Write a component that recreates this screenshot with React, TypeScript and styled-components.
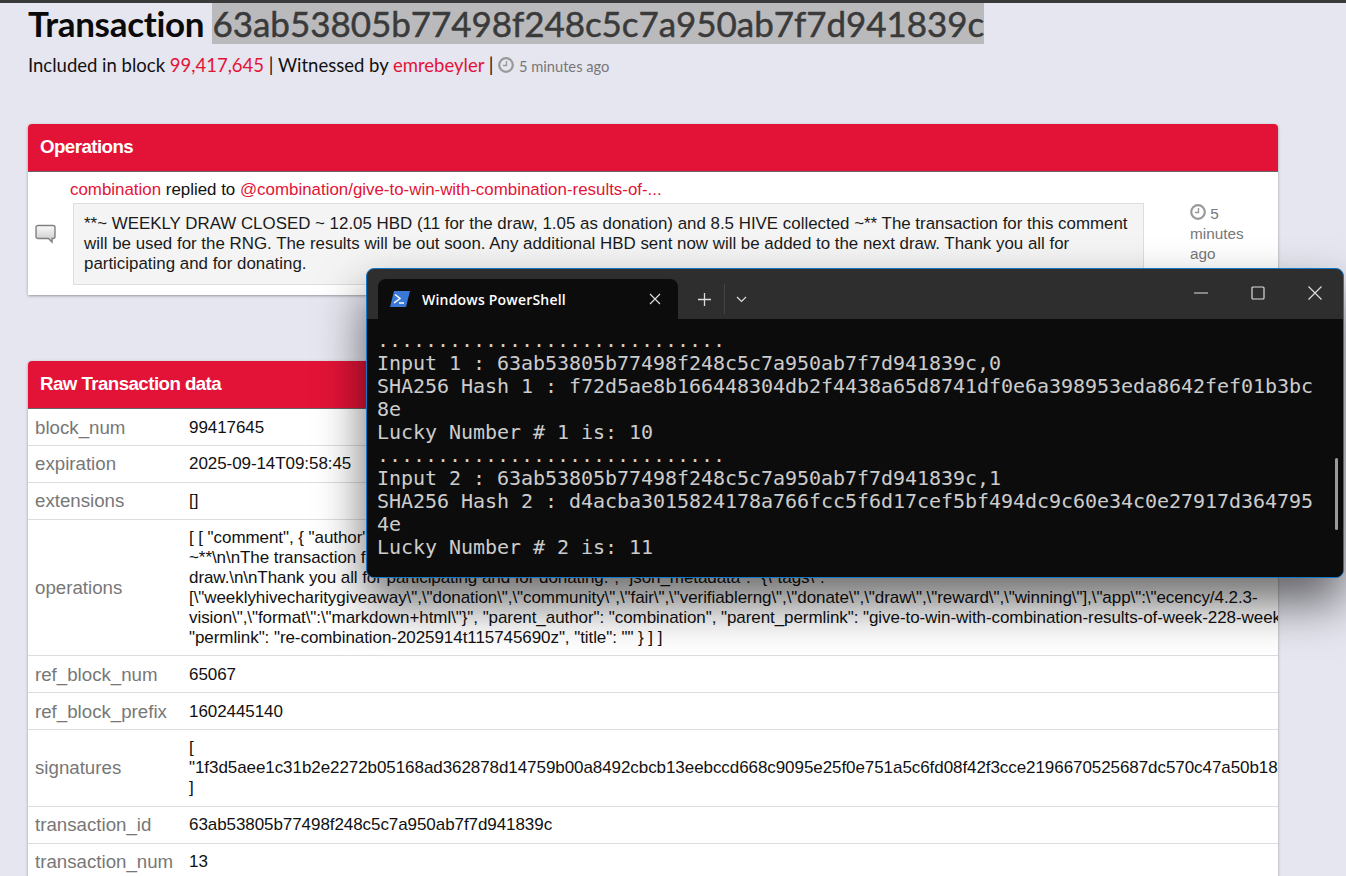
import React from 'react';
import styled, { createGlobalStyle } from 'styled-components';

const GlobalStyle = createGlobalStyle`
  html, body {
    margin: 0;
    padding: 0;
    height: 876px;
    overflow: hidden;
    background: #e6e6f0;
    font-family: "Liberation Sans", Arial, sans-serif;
    color: #111;
  }
`;

const Page = styled.div`
  position: relative;
  height: 876px;
  overflow: hidden;
  border-top: 3px solid #3a3a3a;
  box-sizing: border-box;
`;

const Content = styled.div`
  width: 1250px;
  margin-left: 28px;
`;

const Title = styled.h1`
  margin: 0;
  font-family: Lato, sans-serif;
  font-size: 35px;
  font-weight: 700;
  line-height: 41px;
  letter-spacing: -0.3px;
  color: #0a0a0a;
  white-space: nowrap;
`;

const Selected = styled.span`
  background: #bababd;
  color: #3a3a3a;
  font-weight: 400;
  letter-spacing: -0.05px;
  -webkit-text-stroke: 0.5px #3a3a3a;
`;

const SubLine = styled.div`
  margin-top: 9px;
  font-family: Lato, sans-serif;
  font-size: 18.5px;
  line-height: 24px;
  color: #111;
  white-space: nowrap;
`;

const Link = styled.a`
  color: #e31337;
  text-decoration: none;
`;

const Time = styled.span`
  font-size: 14.7px;
  color: #777;
`;

const ClockSvg = styled.svg`
  width: 16px;
  height: 16px;
  vertical-align: -1px;
`;

const Panel = styled.section<{ $top: number }>`
  margin-top: ${(p) => p.$top}px;
  background: #fff;
  border-radius: 4px 4px 0 0;
  box-shadow: 0 1px 3px rgba(0, 0, 0, 0.35);
  overflow: hidden;
`;

const PanelHeader = styled.div`
  height: 45px;
  padding: 0 0 2px 12px;
  display: flex;
  align-items: center;
  background: #e31337;
  border-bottom: 1px solid #666;
  color: #fff;
  font-size: 18.7px;
  font-weight: 700;
  letter-spacing: -0.55px;
`;

const OpRow = styled.div`
  display: grid;
  grid-template-columns: 42px 1074px 1fr;
  height: 123px;
  font-size: 16.9px;
  line-height: 20px;
`;

const OpIcon = styled.div`
  display: flex;
  align-items: center;
  padding: 1px 0 0 7px;
`;

const OpBody = styled.div`
  padding-top: 8px;
`;

const OpLine = styled.div`
  white-space: nowrap;
`;

const Quote = styled.div`
  margin: 3px 0 0 3px;
  padding: 10px;
  background: #f4f4f4;
  border: 1px solid #ddd;
  color: #1a1a1a;
`;

const OpTime = styled.div`
  padding: 32px 0 0 46px;
  width: 60px;
  color: #777;
  font-size: 15.3px;
`;

const DataRow = styled.div`
  display: grid;
  grid-template-columns: 153px 1fr;
  border-bottom: 1px solid #ddd;
  font-size: 17px;
  line-height: 19.9px;
`;

const DataKey = styled.div`
  padding: 1px 0 0 7px;
  display: flex;
  align-items: center;
  color: #777;
  font-size: 18.7px;
`;

const DataValue = styled.div`
  padding: 8.5px 8px 7.5px;
  white-space: pre;
  overflow: hidden;
  color: #111;
  letter-spacing: -0.07px;
`;

const Terminal = styled.div`
  position: absolute;
  left: 366px;
  top: 265px;
  width: 978px;
  height: 310px;
  box-sizing: border-box;
  display: flex;
  flex-direction: column;
  background: #2e2e2e;
  border: 1px solid #1476c6;
  border-radius: 8px;
  box-shadow: 0 25px 48px rgba(0, 0, 0, 0.58);
  overflow: hidden;
`;

const TitleBar = styled.div`
  height: 50px;
  flex: none;
  display: flex;
  align-items: flex-end;
  padding-left: 11px;
  color: #fff;
`;

const Tab = styled.div`
  width: 300px;
  height: 40px;
  box-sizing: border-box;
  padding: 0 17px 0 12px;
  display: flex;
  align-items: center;
  background: #0c0c0c;
  border-radius: 8px 8px 0 0;
  font-family: "Open Sans", sans-serif;
  font-size: 14px;
  font-weight: 600;
  letter-spacing: 0.2px;
`;

const TabLabel = styled.span`
  margin-left: 12px;
  flex: 1;
`;

const TabTools = styled.div`
  display: flex;
  align-items: center;
  height: 40px;
`;

const ToolButton = styled.div`
  width: 52px;
  height: 40px;
  display: flex;
  align-items: center;
  justify-content: center;
`;

const ToolDivider = styled.div`
  width: 1px;
  height: 30px;
  margin: 0 -10px 0 -6px;
  background: #444;
`;

const WindowButtons = styled.div`
  display: flex;
  margin-left: auto;
  align-self: flex-start;
`;

const WindowButton = styled.div`
  width: 57px;
  height: 48px;
  display: flex;
  align-items: center;
  justify-content: center;
`;

const Screen = styled.div`
  position: relative;
  flex: 1;
  background: #0c0c0c;
  padding: 10px 0 0 10px;
  overflow: hidden;
`;

const Output = styled.pre`
  margin: 0;
  font-family: "DejaVu Sans Mono", monospace;
  font-size: 20px;
  line-height: 23px;
  letter-spacing: -0.04px;
  color: #cccccc;
`;

const ScrollThumb = styled.div`
  position: absolute;
  right: 5px;
  top: 139px;
  width: 3px;
  height: 72px;
  border-radius: 2px;
  background: #9a9a9a;
`;

const Clock = () => (
  <ClockSvg viewBox="0 0 16 16" fill="none">
    <circle cx="8" cy="8" r="6.8" stroke="#999" strokeWidth="2.2" />
    <path d="M8.5 4v4.5H5" stroke="#999" strokeWidth="1.4" />
  </ClockSvg>
);

const rows: [string, string][] = [
  ['block_num', '99417645'],
  ['expiration', '2025-09-14T09:58:45'],
  ['extensions', '[]'],
  [
    'operations',
    `[ [ "comment", { "author": "combination", "body": "**~ WEEKLY DRAW CLOSED ~ 12.05 HBD (11 for the draw, 1.05 as donation) and 8.5 HIVE collected
~**\\n\\nThe transaction for this comment will be used for the RNG.\\n\\nThe results will be out soon.\\n\\nAny additional HBD sent now will be added to the next
draw.\\n\\nThank you all for participating and for donating.", "json_metadata": "{\\"tags\\":
[\\"weeklyhivecharitygiveaway\\",\\"donation\\",\\"community\\",\\"fair\\",\\"verifiablerng\\",\\"donate\\",\\"draw\\",\\"reward\\",\\"winning\\"],\\"app\\":\\"ecency/4.2.3-
vision\\",\\"format\\":\\"markdown+html\\"}", "parent_author": "combination", "parent_permlink": "give-to-win-with-combination-results-of-week-228-week-229",
"permlink": "re-combination-2025914t115745690z", "title": "" } ] ]`,
  ],
  ['ref_block_num', '65067'],
  ['ref_block_prefix', '1602445140'],
  [
    'signatures',
    `[
"1f3d5aee1c31b2e2272b05168ad362878d14759b00a8492cbcb13eebccd668c9095e25f0e751a5c6fd08f42f3cce2196670525687dc570c47a50b18a4c2e
]`,
  ],
  ['transaction_id', '63ab53805b77498f248c5c7a950ab7f7d941839c'],
  ['transaction_num', '13'],
];

const terminalText = `.............................
Input 1 : 63ab53805b77498f248c5c7a950ab7f7d941839c,0
SHA256 Hash 1 : f72d5ae8b166448304db2f4438a65d8741df0e6a398953eda8642fef01b3bc
8e
Lucky Number # 1 is: 10
.............................
Input 2 : 63ab53805b77498f248c5c7a950ab7f7d941839c,1
SHA256 Hash 2 : d4acba3015824178a766fcc5f6d17cef5bf494dc9c60e34c0e27917d364795
4e
Lucky Number # 2 is: 11`;

export default function App() {
  return (
    <>
      <GlobalStyle />
      <Page>
        <Content>
          <Title>
            Transaction <Selected>63ab53805b77498f248c5c7a950ab7f7d941839c</Selected>
          </Title>
          <SubLine>
            Included in block <Link>99,417,645</Link> | Witnessed by <Link>emrebeyler</Link> |{' '}
            <Clock /> <Time>5 minutes ago</Time>
          </SubLine>

          <Panel $top={46}>
            <PanelHeader>Operations</PanelHeader>
            <OpRow>
              <OpIcon>
                <svg width="21" height="20" viewBox="0 0 21 20">
                  <defs>
                    <linearGradient id="bubble" x1="0" y1="0" x2="0" y2="1">
                      <stop offset="0" stopColor="#fafafa" />
                      <stop offset="1" stopColor="#c8c8c8" />
                    </linearGradient>
                  </defs>
                  <path
                    d="M3 1.5h15a2 2 0 0 1 2 2v9a2 2 0 0 1-2 2h-1v3.5l-3.5-3.5H3a2 2 0 0 1-2-2v-9a2 2 0 0 1 2-2z"
                    fill="url(#bubble)"
                    stroke="#808080"
                    strokeWidth="1.4"
                  />
                </svg>
              </OpIcon>
              <OpBody>
                <OpLine>
                  <Link>combination</Link> replied to{' '}
                  <Link>@combination/give-to-win-with-combination-results-of-...</Link>
                </OpLine>
                <Quote>
                  **~ WEEKLY DRAW CLOSED ~ 12.05 HBD (11 for the draw, 1.05 as donation) and 8.5 HIVE collected ~** The
                  transaction for this comment will be used for the RNG. The results will be out soon. Any additional
                  HBD sent now will be added to the next draw. Thank you all for participating and for donating.
                </Quote>
              </OpBody>
              <OpTime>
                <Clock /> 5 minutes ago
              </OpTime>
            </OpRow>
          </Panel>

          <Panel $top={66}>
            <PanelHeader>Raw Transaction data</PanelHeader>
            {rows.map(([key, value]) => (
              <DataRow key={key}>
                <DataKey>{key}</DataKey>
                <DataValue>{value}</DataValue>
              </DataRow>
            ))}
          </Panel>
        </Content>

        <Terminal>
          <TitleBar>
            <Tab>
              <svg width="20" height="16" viewBox="0 0 20 16">
                <path d="M4 0h16l-4 16H0z" fill="#3a78d8" />
                <path d="M5 3.5l5 4-6 4.5" fill="none" stroke="#fff" strokeWidth="1.5" />
                <path d="M9 12h5" stroke="#fff" strokeWidth="1.5" />
              </svg>
              <TabLabel>Windows PowerShell</TabLabel>
              <svg width="12" height="12" viewBox="0 0 12 12">
                <path d="M1 1l10 10M11 1L1 11" stroke="#ddd" strokeWidth="1.2" />
              </svg>
            </Tab>
            <TabTools>
              <ToolButton>
                <svg width="13" height="13" viewBox="0 0 13 13">
                  <path d="M6.5 0v13M0 6.5h13" stroke="#ddd" strokeWidth="1.3" />
                </svg>
              </ToolButton>
              <ToolDivider />
              <ToolButton>
                <svg width="11" height="7" viewBox="0 0 11 7">
                  <path d="M1 1l4.5 4.5L10 1" fill="none" stroke="#ddd" strokeWidth="1.2" />
                </svg>
              </ToolButton>
            </TabTools>
            <WindowButtons>
              <WindowButton>
                <svg width="14" height="2" viewBox="0 0 14 2">
                  <path d="M0 1h14" stroke="#ddd" strokeWidth="1.2" />
                </svg>
              </WindowButton>
              <WindowButton>
                <svg width="14" height="14" viewBox="0 0 14 14">
                  <rect x="1" y="1" width="12" height="12" rx="1" fill="none" stroke="#ddd" strokeWidth="1.2" />
                </svg>
              </WindowButton>
              <WindowButton>
                <svg width="14" height="14" viewBox="0 0 14 14">
                  <path d="M0.5 0.5l13 13M13.5 0.5l-13 13" stroke="#ddd" strokeWidth="1.2" />
                </svg>
              </WindowButton>
            </WindowButtons>
          </TitleBar>
          <Screen>
            <Output>{terminalText}</Output>
            <ScrollThumb />
          </Screen>
        </Terminal>
      </Page>
    </>
  );
}
